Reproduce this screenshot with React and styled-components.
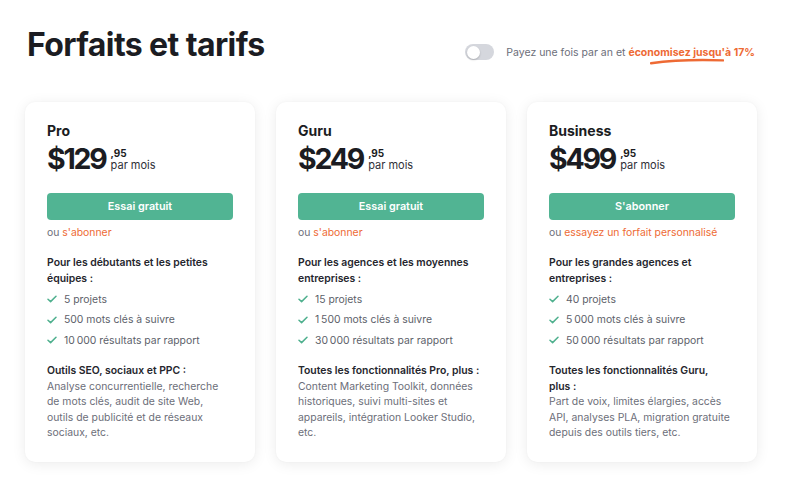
import React from "react";
import styled, { createGlobalStyle } from "styled-components";

const Global = createGlobalStyle`
  html, body { margin: 0; padding: 0; background: #ffffff; }
  body { font-family: Inter, "Noto Sans", sans-serif; color: #1b1c22; -webkit-font-smoothing: antialiased; }
  * { box-sizing: border-box; }
`;

const Page = styled.div`
  width: 800px;
  height: 502px;
  overflow: hidden;
  background: #fff;
`;

const Header = styled.header`
  display: flex;
  justify-content: space-between;
  align-items: flex-start;
  padding: 25px 45px 0 27px;
  height: 102px;
`;

const Title = styled.h1`
  margin: 0;
  font-size: 32px;
  line-height: 40px;
  font-weight: 700;
  letter-spacing: -0.6px;
  color: #1b1c22;
`;

const Billing = styled.div`
  display: flex;
  align-items: center;
  gap: 12px;
  margin-top: 19px;
  font-size: 10.5px;
  color: #6c6e79;
`;

const Toggle = styled.span`
  position: relative;
  width: 29px;
  height: 16px;
  border-radius: 8px;
  background: #d5d7dd;
  flex: none;
  &::after {
    content: "";
    position: absolute;
    left: 1.5px;
    top: 1.5px;
    width: 13px;
    height: 13px;
    border-radius: 50%;
    background: #fff;
    box-shadow: 0 1px 2px rgba(0,0,0,0.2);
  }
`;

const Highlight = styled.span`
  position: relative;
  color: #ee6a34;
  font-weight: 700;
`;

const Swoosh = styled.svg`
  position: absolute;
  left: 22px;
  top: 12px;
  width: 74px;
  height: 7px;
`;

const Cards = styled.main`
  display: grid;
  grid-template-columns: repeat(3, 230px);
  gap: 21px;
  padding: 0 25px;
`;

const Card = styled.section`
  height: 360px;
  background: #fff;
  border-radius: 10px;
  box-shadow: 0 2px 14px rgba(0, 0, 0, 0.08), 0 0 2px rgba(0,0,0,0.04);
  padding: 20px 22px 18px;
  display: flex;
  flex-direction: column;
  & > * { flex-shrink: 0; }
`;

const PlanName = styled.h2`
  margin: 0;
  font-size: 14px;
  line-height: 18px;
  font-weight: 700;
  color: #1b1c22;
`;

const PriceRow = styled.div`
  display: flex;
  align-items: flex-start;
  margin-top: 1px;
  height: 38px;
`;

const Amount = styled.span`
  font-size: 28.5px;
  line-height: 36px;
  font-weight: 700;
  letter-spacing: -2.2px;
  color: #1b1c22;
`;

const PriceSide = styled.div`
  display: flex;
  flex-direction: column;
  margin-left: 5px;
  margin-top: 7px;
`;

const Cents = styled.span`
  font-size: 10px;
  line-height: 10px;
  font-weight: 700;
  color: #1b1c22;
`;

const Per = styled.span`
  font-size: 11px;
  line-height: 13px;
  color: #2f3038;
  margin-top: 1px;
`;

const Button = styled.button`
  margin-top: 14px;
  width: 100%;
  height: 27px;
  border: none;
  border-radius: 4px;
  background: #51b493;
  color: #fff;
  font-family: inherit;
  font-size: 10.8px;
  font-weight: 600;
  cursor: pointer;
`;

const Alt = styled.p`
  margin: 5px 0 0;
  font-size: 10.4px;
  line-height: 16px;
  color: #6c6e79;
`;

const Link = styled.a`
  color: #ee6a34;
  text-decoration: none;
`;

const Heading = styled.h3`
  margin: ${(p) => (p.$first ? "14px" : "12.5px")} 0 0;
  max-width: 184px;
  font-size: 10.4px;
  line-height: 15.5px;
  font-weight: 600;
  color: #25262d;
`;

const List = styled.ul`
  list-style: none;
  margin: 3px 0 0;
  padding: 0;
  display: flex;
  flex-direction: column;
`;

const Item = styled.li`
  display: flex;
  align-items: center;
  gap: 7px;
  height: 20.5px;
  font-size: 10.4px;
  color: #5d5f6a;
`;

const Desc = styled.p`
  margin: 0;
  max-width: 184px;
  font-size: 10.4px;
  line-height: 15.5px;
  color: #6c6e79;
`;

const Check = () => (
  <svg width="10" height="8" viewBox="0 0 10 8" fill="none">
    <path d="M1 4.2 L3.6 6.6 L9 1.2" stroke="#4fb08e" strokeWidth="1.5" strokeLinecap="round" strokeLinejoin="round" />
  </svg>
);

const plans = [
  {
    name: "Pro",
    price: "$129",
    cta: "Essai gratuit",
    link: "s'abonner",
    heading: "Pour les débutants et les petites équipes\u00a0:",
    items: ["5 projets", "500 mots clés à suivre", "10\u202f000 résultats par rapport"],
    featHead: "Outils SEO, sociaux et PPC\u00a0:",
    feat: "Analyse concurrentielle, recherche de mots clés, audit de site Web, outils de publicité et de réseaux sociaux, etc.",
  },
  {
    name: "Guru",
    price: "$249",
    cta: "Essai gratuit",
    link: "s'abonner",
    heading: "Pour les agences et les moyennes entreprises\u00a0:",
    items: ["15 projets", "1\u202f500 mots clés à suivre", "30\u202f000 résultats par rapport"],
    featHead: "Toutes les fonctionnalités Pro, plus\u00a0:",
    feat: "Content Marketing Toolkit, données historiques, suivi multi-sites et appareils, intégration Looker Studio, etc.",
  },
  {
    name: "Business",
    price: "$499",
    cta: "S'abonner",
    link: "essayez un forfait personnalisé",
    heading: "Pour les grandes agences et entreprises\u00a0:",
    items: ["40 projets", "5\u202f000 mots clés à suivre", "50\u202f000 résultats par rapport"],
    featHead: "Toutes les fonctionnalités Guru, plus\u00a0:",
    feat: "Part de voix, limites élargies, accès API, analyses PLA, migration gratuite depuis des outils tiers, etc.",
  },
];

export default function App() {
  return (
    <Page>
      <Global />
      <Header>
        <Title>Forfaits et tarifs</Title>
        <Billing>
          <Toggle />
          <span>
            Payez une fois par an et{" "}
            <Highlight>
              économisez jusqu'à 17%
              <Swoosh viewBox="0 0 74 7" preserveAspectRatio="none">
                <path d="M1 5.2 C 20 2.6, 45 1.4, 73 2.4" stroke="#ee6a34" strokeWidth="2.4" fill="none" strokeLinecap="round" />
              </Swoosh>
            </Highlight>
          </span>
        </Billing>
      </Header>
      <Cards>
        {plans.map((p) => (
          <Card key={p.name}>
            <PlanName>{p.name}</PlanName>
            <PriceRow>
              <Amount>{p.price}</Amount>
              <PriceSide>
                <Cents>,95</Cents>
                <Per>par mois</Per>
              </PriceSide>
            </PriceRow>
            <Button>{p.cta}</Button>
            <Alt>
              ou <Link href="#">{p.link}</Link>
            </Alt>
            <Heading $first>{p.heading}</Heading>
            <List>
              {p.items.map((it) => (
                <Item key={it}>
                  <Check />
                  {it}
                </Item>
              ))}
            </List>
            <Heading>{p.featHead}</Heading>
            <Desc>{p.feat}</Desc>
          </Card>
        ))}
      </Cards>
    </Page>
  );
}
